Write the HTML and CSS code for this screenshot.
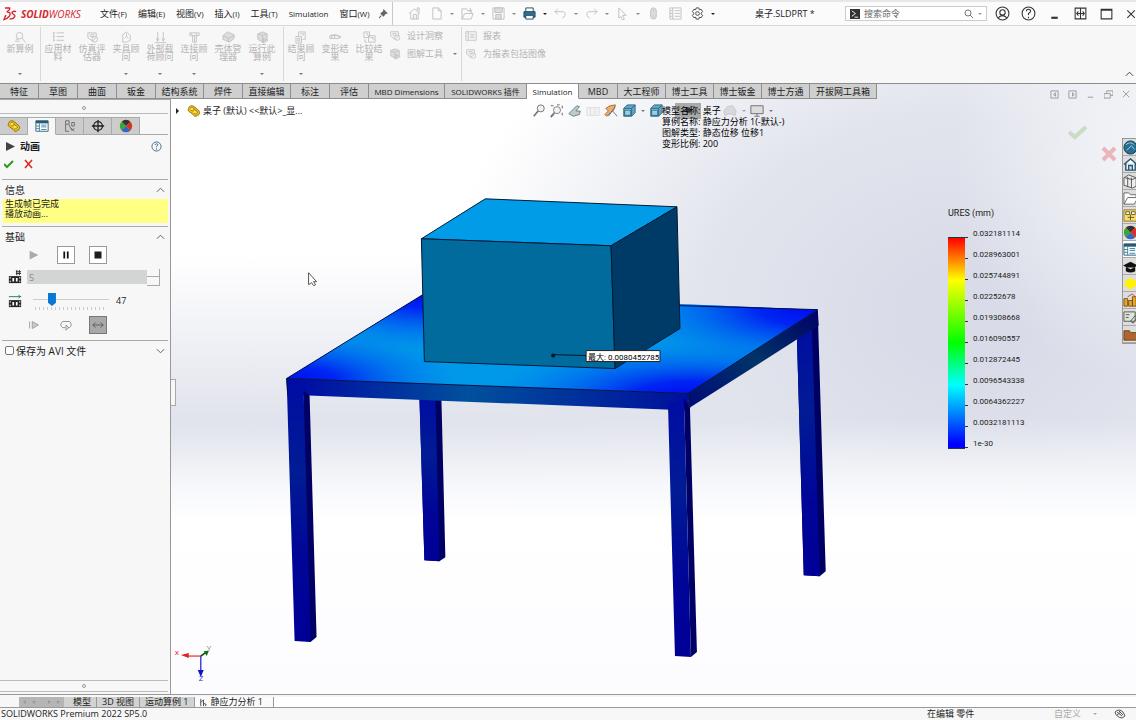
FILE: index.html
```html
<!DOCTYPE html>
<html lang="zh-CN">
<head>
<meta charset="utf-8">
<title>桌子.SLDPRT - SOLIDWORKS</title>
<link rel="stylesheet" href="styles.css">
</head>
<body>
<svg class="defs" aria-hidden="true">
  <defs>
    <symbol id="i-mag" viewBox="0 0 14 14"><circle cx="6" cy="5" r="3.5"/><path d="M8.500 7.500l4 5M1 11h5M2 9h3"/></symbol>
    <symbol id="i-list" viewBox="0 0 14 14"><path d="M1 2h2M5 2h8M1 6h2M5 6h8M1 10h2M5 10h8M2 1v10"/></symbol>
    <symbol id="i-eval" viewBox="0 0 14 14"><path d="M2 2h9v5l-4 4-5-4zM4 4h5M4 6h5"/><circle cx="9.500" cy="9" r="3"/></symbol>
    <symbol id="i-fix" viewBox="0 0 14 14"><path d="M3 12V4l4-3 4 4v5l-4 2zM5 8l2-2 2 2M7 3v3"/></symbol>
    <symbol id="i-load" viewBox="0 0 14 14"><path d="M4 1v10M2.500 8L4 11l1.500-3M10 1v10M8.500 8l1.500 3 1.500-3M1 12.500h12"/></symbol>
    <symbol id="i-conn" viewBox="0 0 14 14"><path d="M2 2h10v3H2zM5 5v7h4V5M7 5v7M3 2l2 3M8 2l2 3"/></symbol>
    <symbol id="i-shell" viewBox="0 0 14 14"><path class="soft" d="M1 5l5-4 7 3v4l-5 4-7-3z"/><path d="M1 5l6 3 6-3M7 8v4"/></symbol>
    <symbol id="i-run" viewBox="0 0 14 14"><path class="soft" d="M2 3l5-2 5 2v6l-5 3-5-3z"/><path d="M2 3l5 2 5-2M7 5v7M8 8l5 2-5 3z"/></symbol>
    <symbol id="i-result" viewBox="0 0 14 14"><path d="M4 6V1h7v8H8M1 6h6v7H1zM3 8h2v3H3zM6 3h3v2"/></symbol>
    <symbol id="i-deform" viewBox="0 0 14 14"><path d="M1 5h10v3H1zM1 5q6-3 12 2l-3-1M3 5v3M6 5v3"/></symbol>
    <symbol id="i-comp" viewBox="0 0 14 14"><path d="M1 1h6v6H1zM6 5h7v7H6zM3 3h2v2M8 7h3v3M2 9v3h2"/></symbol>
    <symbol id="i-report" viewBox="0 0 14 14"><path d="M1 2h12v10H1zM4 2v10M6 5h5M6 7h5M6 9h5M2 4h1M2 8h1"/></symbol>
    <symbol id="i-part" viewBox="0 0 16 16"><path d="M2 5c0-3 4-4 6-2l5 4c2 2 2 5-1 6-2 2-4 1-5-1l-4-3C1 8 1 6 2 5z" fill="#eec11b" stroke="#876400"/><path d="M4 5c1-2 4-1 4 1S5 8 4 7M8 6l4 3c0 2-2 3-4 2" fill="#ffe05b" stroke="#9a7300"/></symbol>
    <symbol id="i-ball" viewBox="0 0 16 16"><circle cx="8" cy="8" r="7" fill="#efb700"/><path d="M8 8L3 3a7 7 0 0 1 10 0z" fill="#333"/><path d="M8 8L3 3a7 7 0 0 0 0 10z" fill="#38a53d"/><path d="M8 8l5-5a7 7 0 0 1 0 10z" fill="#d83129"/><path d="M8 8L3 13a7 7 0 0 0 10 0z" fill="#3167cc"/></symbol>
    <symbol id="i-table" viewBox="0 0 16 16"><path d="M1 2h14v12H1z" fill="#fff" stroke="#255b78"/><path d="M1 2h14v3H1z" fill="#255b78"/><path d="M5 5v9M1 8h4M1 11h4M7 7h6M7 9h6M7 12h6" stroke="#397da0"/></symbol>
    <symbol id="i-film" viewBox="0 0 16 16"><path d="M1 7h14v8H1z" fill="#222"/><path d="M5 9h2v4H5zM9 9h2v4H9zM2 8h1v2H2zM2 12h1v2H2zM13 8h1v2h-1zM13 12h1v2h-1z" fill="#fff"/></symbol>
    <symbol id="i-cube" viewBox="0 0 16 16"><path d="M2 5l4-4h9v9l-4 4H2z" fill="#62a9c7" stroke="#27627e"/><path d="M2 5h9v9M11 5l4-4M3 7h7v6H3z" fill="#9dccdf" stroke="#27627e"/></symbol>
    <symbol id="i-up" viewBox="0 0 10 6"><path d="M1 5l4-4 4 4"/></symbol>
    <symbol id="i-down" viewBox="0 0 10 6"><path d="M1 1l4 4 4-4"/></symbol>
  </defs>
</svg>

<header class="titlebar">
  <div class="brand">
    <svg class="brand-mark" viewBox="0 0 16 15"><path d="M2 1h5q1 2-3 4M4 5.500q5-.500 3 4-2 3-6 4l2-5M14 5c-3-1-5 0-4 2 1 1 4 2 2 4-1 2-3 2-5 2"/></svg>
    <span class="brand-name"><b>SOLID</b>WORKS</span>
  </div>
  <nav class="menus">
    <button>文件<small>(F)</small></button><button>编辑<small>(E)</small></button><button>视图<small>(V)</small></button><button>插入<small>(I)</small></button><button>工具<small>(T)</small></button><button class="menu-sim">Simulation</button><button>窗口<small>(W)</small></button>
  </nav>
  <svg class="pin" viewBox="0 0 10 10"><path d="M5 1l4 4-2 .500L5 8 2 5l2.500-2z" fill="#666"/><path d="M3 7L1 9" stroke="#666"/></svg>
  <div class="quick">
    <button class="q" aria-label="主页"><svg viewBox="0 0 14 14"><path d="M1 7l6-5 6 5M3 6v7h8V6M6 13V8h3v5M10 4V1h2v4"/></svg></button>
    <button class="q drop" aria-label="新建"><svg viewBox="0 0 14 14"><path d="M3 1h6l3 3v9H3zM9 1v3h3"/></svg></button>
    <button class="q drop" aria-label="打开"><svg viewBox="0 0 14 14"><path d="M1 13V2h5l1 2h4v3M1 13l3-6h9l-2 6zM10 1v4M8 3l2 2 2-2"/></svg></button>
    <button class="q drop" aria-label="保存"><svg viewBox="0 0 14 14"><path d="M1 1h12v12H1z"/><path class="soft" d="M3 1h8v5H3zM4 8h6v5H4z"/></svg></button>
    <button class="q drop dark" aria-label="打印"><svg viewBox="0 0 14 14"><path d="M3 6V1h8v5" fill="#fff" stroke="#24495f"/><path d="M1 5h12v6H1z" fill="#2f7194" stroke="#24495f"/><path d="M3 9h8v4H3z" fill="#fff" stroke="#24495f"/></svg></button>
    <button class="q drop" aria-label="撤销"><svg viewBox="0 0 14 14"><path d="M1 5h7q5 0 4 4-1 2-3 3M4 2L1 5l3 3"/></svg></button>
    <button class="q drop" aria-label="重做"><svg viewBox="0 0 14 14"><path d="M13 5H6Q1 5 2 9q1 2 3 3M10 2l3 3-3 3"/></svg></button>
    <button class="q drop" aria-label="选择"><svg viewBox="0 0 14 14"><path d="M3 1l8 8H7l2 4-2 1-2-4-2 2z"/></svg></button>
    <button class="q" aria-label="重建"><svg viewBox="0 0 14 14"><rect class="soft" x="4" y="1" width="6" height="12" rx="3"/><path d="M7 3v2M7 9v2"/></svg></button>
    <button class="q" aria-label="属性"><svg viewBox="0 0 14 14"><path d="M1 1h12v12H1zM4 1v12M6 4h6M6 7h6M6 10h6M1 4h3M1 7h3M1 10h3"/></svg></button>
    <button class="q drop dark" aria-label="选项"><svg viewBox="0 0 14 14"><path d="M5.500 1h3l.5 2 2-.500 1.500 2.500L11 6.500v1L12.500 9 11 11.500 9 11l-.5 2h-3L5 11l-2 .500L1.500 9 3 7.500v-1L1.500 5 3 2.500 5 3z"/><circle cx="7" cy="7" r="2"/></svg></button>
  </div>
  <h1 class="doc">桌子.SLDPRT *</h1>
  <form class="search"><svg class="cmd" viewBox="0 0 11 11"><path d="M0 0h11v11H0z" fill="#303236"/><path d="M2 2l4 3-4 3M5 9h4" stroke="#fff" fill="none"/></svg><input type="text" placeholder="搜索命令" aria-label="搜索命令"><svg class="lens" viewBox="0 0 10 10"><circle cx="4" cy="4" r="3"/><path d="M6 6l3 3"/></svg><i class="caret"></i></form>
  <div class="win">
    <button aria-label="用户"><svg viewBox="0 0 14 14"><circle cx="7" cy="7" r="6"/><circle cx="7" cy="6" r="2.500"/><path d="M3 11q4-4 8 0"/></svg></button>
    <button aria-label="帮助"><svg viewBox="0 0 14 14"><circle cx="7" cy="7" r="6"/><path d="M5 5q0-2 2-2t2 2q0 1-2 2v1.500M7 10v1.500"/></svg></button>
    <button aria-label="最小化"><svg viewBox="0 0 14 14"><path d="M4 11h6" stroke-width="2"/></svg></button>
    <button aria-label="并排"><svg viewBox="0 0 14 14"><path d="M2 2h10v10H2zM7 2v10M3 7h8M5 5L3.500 7 5 9M9 5l1.500 2L9 9"/></svg></button>
    <button aria-label="最大化"><svg viewBox="0 0 14 14"><path d="M2 3h10v9H2zM2 4h10"/></svg></button>
    <button aria-label="关闭"><svg viewBox="0 0 14 14"><path d="M4 4l7 7M11 4l-7 7"/></svg></button>
  </div>
</header>

<section class="ribbon">
  <button class="cmdb first more"><svg><use href="#i-mag"/></svg><span>新算例</span></button>
  <div class="rgroup study">
    <button class="cmdb"><svg><use href="#i-list"/></svg><span>应用材料</span></button>
    <button class="cmdb"><svg><use href="#i-eval"/></svg><span>仿真评估器</span></button>
    <button class="cmdb more"><svg><use href="#i-fix"/></svg><span>夹具顾问</span></button>
    <button class="cmdb more"><svg><use href="#i-load"/></svg><span>外部载荷顾问</span></button>
    <button class="cmdb more"><svg><use href="#i-conn"/></svg><span>连接顾问</span></button>
    <button class="cmdb"><svg><use href="#i-shell"/></svg><span>壳体管理器</span></button>
    <button class="cmdb more"><svg><use href="#i-run"/></svg><span>运行此算例</span></button>
  </div>
  <div class="rgroup">
    <button class="cmdb more"><svg><use href="#i-result"/></svg><span>结果顾问</span></button>
    <button class="cmdb"><svg><use href="#i-deform"/></svg><span>变形结果</span></button>
    <button class="cmdb"><svg><use href="#i-comp"/></svg><span>比较结果</span></button>
    <div class="rows"><button><svg><use href="#i-eval"/></svg>设计洞察</button><button><svg><use href="#i-run"/></svg>图解工具<i class="caret"></i></button></div>
  </div>
  <div class="rgroup last">
    <div class="rows"><button><svg><use href="#i-report"/></svg>报表</button><button><svg><use href="#i-eval"/></svg>为报表包括图像</button></div>
  </div>
  <button class="collapse" aria-label="折叠"><svg class="chev"><use href="#i-up"/></svg></button>
</section>

<main class="work">
  <div class="tabrow">
    <nav class="tabs">
      <button>特征</button><button>草图</button><button>曲面</button><button>钣金</button><button class="m">结构系统</button><button>焊件</button><button class="m">直接编辑</button><button>标注</button><button>评估</button><button class="dim">MBD Dimensions</button><button class="addin">SOLIDWORKS 插件</button><button class="sim on">Simulation</button><button>MBD</button><button class="m">大工程师</button><button class="m">博士工具</button><button class="m">博士钣金</button><button class="m">博士方通</button><button class="l">开拔网工具箱</button>
    </nav>
    <div class="docwin">
      <button aria-label="左窗格"><svg viewBox="0 0 10 10"><path d="M1 1h8v8H1zM6 3L4 5l2 2z"/></svg></button>
      <button aria-label="右窗格"><svg viewBox="0 0 10 10"><path d="M1 1h8v8H1zM5 3l2 2-2 2z"/></svg></button>
      <button aria-label="最小化文档"><svg viewBox="0 0 10 10"><path d="M2 8h6"/></svg></button>
      <button aria-label="还原文档"><svg viewBox="0 0 10 10"><path d="M3 3V1h7v5H7M0 4h7v5H0z"/></svg></button>
      <button aria-label="关闭文档"><svg viewBox="0 0 10 10"><path d="M1 1l7 7M8 1L1 8"/></svg></button>
    </div>
  </div>

  <div class="body">
    <aside class="panel">
      <div class="grip"><i></i></div>
      <nav class="ptabs">
        <button aria-label="特征树"><svg><use href="#i-part"/></svg></button>
        <button class="on" aria-label="属性"><svg><use href="#i-table"/></svg></button>
        <button aria-label="配置"><svg viewBox="0 0 16 16"><path d="M3 2h4v4H3zM3 6v8h4M10 4h3v4h-3zM7 7l3 6 3-2M9 10l4 4" fill="none" stroke="#666"/></svg></button>
        <button aria-label="尺寸专家"><svg viewBox="0 0 16 16"><circle cx="8" cy="8" r="5" fill="none" stroke="#222" stroke-width="1.500"/><path d="M8 1v14M1 8h14" stroke="#222" stroke-width="1.500"/></svg></button>
        <button aria-label="外观"><svg><use href="#i-ball"/></svg></button>
      </nav>
      <div class="phead"><svg viewBox="0 0 10 10"><path d="M0 0l10 5-10 5z" fill="#444"/></svg><h2>动画</h2><button aria-label="帮助"><svg viewBox="0 0 12 12"><circle cx="6" cy="6" r="5" fill="none" stroke="#3b6788"/><path d="M4.500 4.500q0-1.500 1.500-1.500t1.500 1.500L6 6v1M6 8v1.500" fill="none" stroke="#3b6788"/></svg></button></div>
      <div class="okrow"><button aria-label="确定"><svg viewBox="0 0 10 10"><path d="M0 5l3 3 6-6" fill="none" stroke="#2b9a22" stroke-width="2"/></svg></button><button aria-label="取消"><svg viewBox="0 0 10 10"><path d="M1 1l7 8M8 1L1 9" fill="none" stroke="#dc2417" stroke-width="1.500"/></svg></button></div>
      <section class="sec">
        <h3>信息<svg class="chev"><use href="#i-up"/></svg></h3>
        <p class="msg">生成帧已完成<br>播放动画...</p>
      </section>
      <section class="sec base">
        <h3>基础<svg class="chev"><use href="#i-up"/></svg></h3>
        <div class="play">
          <button aria-label="播放"><svg viewBox="0 0 16 16"><path d="M3 3l10 5-10 5z" fill="#aaa"/></svg></button>
          <button class="box" aria-label="暂停"><svg viewBox="0 0 16 16"><path d="M6 4v8M10 4v8" stroke="#111" stroke-width="2"/></svg></button>
          <button class="box" aria-label="停止"><svg viewBox="0 0 16 16"><path d="M4 4h8v8H4z" fill="#1c1c24"/></svg></button>
        </div>
        <div class="frames"><svg class="ic" viewBox="0 0 16 16"><use href="#i-film"/><path d="M10 0v6M13 0v6M9 2h6M9 4h6" stroke="#222"/></svg><input type="text" value="5" disabled aria-label="帧数"><div class="spin"><button aria-label="增加"></button><button aria-label="减少"></button></div></div>
        <div class="speed"><svg class="ic" viewBox="0 0 16 16"><use href="#i-film"/><path d="M1 3h14M12 1l2 2-2 2" stroke="#087b67" fill="none"/></svg><div class="track"><input type="range" min="0" max="100" value="22" aria-label="速度"><div class="ticks"></div></div><output>47</output></div>
        <div class="play loop">
          <button aria-label="单次"><svg viewBox="0 0 16 16"><path d="M3 4v8" stroke="#999"/><path d="M6 4l7 4-7 4z" fill="#ccc" stroke="#999"/></svg></button>
          <button aria-label="循环"><svg viewBox="0 0 16 16"><path d="M7 11H4Q0 8 4 4h8q4 4 0 7H10M8 8v6l3-3z" fill="none" stroke="#888"/></svg></button>
          <button class="box on" aria-label="往复"><svg viewBox="0 0 16 16"><path d="M2 8h12M5 5L2 8l3 3M11 5l3 3-3 3" fill="none" stroke="#555"/></svg></button>
        </div>
      </section>
      <section class="sec save"><label><input type="checkbox">保存为 AVI 文件</label><svg class="chev"><use href="#i-down"/></svg></section>
      <div class="grip foot"><i></i></div>
    </aside>

    <section class="view">
      <svg class="scene" viewBox="171 98 965 596" preserveAspectRatio="xMidYMid meet">
        <defs>
          <radialGradient id="corner"><stop offset="0" stop-color="#0008f0"/><stop offset=".3" stop-color="#0018f4" stop-opacity=".9"/><stop offset=".65" stop-color="#0048f4" stop-opacity=".45"/><stop offset="1" stop-color="#0070f0" stop-opacity="0"/></radialGradient>
          <linearGradient id="front"><stop offset="0" stop-color="#0008a4"/><stop offset=".45" stop-color="#00509c"/><stop offset="1" stop-color="#000f9c"/></linearGradient>
          <linearGradient id="side" x1="0" y1="1" x2="1" y2="0"><stop offset="0" stop-color="#000a78"/><stop offset=".5" stop-color="#003468"/><stop offset="1" stop-color="#000068"/></linearGradient>
          <linearGradient id="leg" x2="0" y2="1"><stop offset="0" stop-color="#000ca4"/><stop offset=".35" stop-color="#001c94"/><stop offset=".7" stop-color="#000598"/><stop offset="1" stop-color="#000096"/></linearGradient>
          <clipPath id="topclip"><path d="M286 378L424 293 818 309 688 393z"/></clipPath>
        </defs>
        <path d="M419 396h22l4 161-6 4-15-1z" fill="#000062"/><path d="M419 396h16l4 165-15-1z" fill="url(#leg)"/>
        <path d="M797 332l21-22 8 261-6 5-16-1z" fill="#000062"/><path d="M797 332l15-10 8 254-16-1z" fill="url(#leg)"/>
        <g clip-path="url(#topclip)"><path d="M280 280h550v130H280z" fill="#0098e9"/>
          <ellipse cx="286" cy="382" rx="170" ry="56" fill="url(#corner)"/><ellipse cx="424" cy="289" rx="150" ry="62" fill="url(#corner)"/><ellipse cx="818" cy="306" rx="200" ry="66" fill="url(#corner)"/><ellipse cx="690" cy="398" rx="200" ry="58" fill="url(#corner)"/></g>
        <path d="M688 393L818 309l1 16-22 14-107 68z" fill="url(#side)"/>
        <path d="M286 378l402 15 2 17-382-15-21 1z" fill="url(#front)"/>
        <path d="M303 390l6 5 7 242-6 5-10-2z" fill="#000065"/><path d="M286 378l17 12 7 252-16-1z" fill="url(#leg)"/>
        <path d="M684 398l6 9 7 245-6 5z" fill="#000065"/><path d="M668 403l16-5 7 259-16-1z" fill="url(#leg)"/>
        <path d="M286 378L424 293M680 305l138 4-130 84-402-15 1 15M688 393l2 14" fill="none" stroke="#001044"/>
        <g stroke="#001a36" stroke-linejoin="round"><path d="M421 238l64-40 192 8-66 39z" fill="#009ce7"/><path d="M421 238l190 7 4 123-191-7z" fill="#006b9c"/><path d="M611 245l66-39 3 122-65 40z" fill="#003a66"/></g>
        <path d="M552 354l34 1" stroke="#001428"/><circle cx="553" cy="355" r="2" fill="#001428"/>
        <path d="M586 350h74v11h-74z" fill="#fff" stroke="#222"/>
        <text class="maxtext" x="588" y="359">最大: 0.0080452785</text>
        <path d="M308 272v12l3-2 2 3 2-1-2-3h3z" fill="#fff" stroke="#555"/>
        <g stroke-width="1.500"><path d="M200 656h-15" stroke="#ee5252"/><path d="M188 653v5l-8-3z" fill="#df2222"/><path d="M200 656v15" stroke="#4444dc"/><path d="M197 670h6l-3 7z" fill="#1111cc"/><path d="M200 656l7-5" stroke="#073c0b"/><path d="M203 651l5 0-2 5z" fill="#06770e"/></g>
        <text class="axis" x="174" y="655" fill="#d22">x</text><text class="axis" x="206" y="651" fill="#777">Y</text><text class="axis" x="198" y="681" fill="#33c">Z</text>
      </svg>

      <button class="splitter" aria-label="收起面板"></button>
      <div class="tree"><i></i><svg><use href="#i-part"/></svg><span>桌子 (默认) &lt;&lt;默认&gt;_显...</span></div>
      <div class="viewtools">
        <button aria-label="整屏显示"><svg viewBox="0 0 16 16"><circle cx="10" cy="5" r="4" fill="#eef5fa" stroke="#666"/><path d="M7 8l-5 6" stroke="#777" stroke-width="2"/></svg></button>
        <button aria-label="局部放大"><svg viewBox="0 0 16 16"><path d="M1 2h3M8 1h3M14 2v3M14 10v3M1 13h3" stroke="#555"/><circle cx="8" cy="7" r="4" fill="#eef5fa" stroke="#777"/><path d="M5 10l-4 5" stroke="#777" stroke-width="2"/></svg></button>
        <button aria-label="上一视图"><svg viewBox="0 0 16 16"><path d="M1 11l9-9 3 1-4 5h5l-1 4-7 2z" fill="#bdcbd1" stroke="#66777d"/></svg></button>
        <button class="faint" aria-label="剖面"><svg viewBox="0 0 16 16"><path d="M1 4h14v9H1zM5 4v9M10 4v9" fill="#eee" stroke="#ccc"/></svg></button>
        <button aria-label="动态注解"><svg viewBox="0 0 16 16"><path d="M2 5l5-3 6-1-2 6-3 2-5 5-2-2 4-4z" fill="#edb06d" stroke="#a45b28"/><path d="M13 3L5 14M9 7l6 7" stroke="#557482"/></svg></button>
        <button class="vd" aria-label="视图定向"><svg><use href="#i-cube"/></svg><i class="caret"></i></button>
        <button aria-label="显示样式"><svg><use href="#i-cube"/></svg></button>
        <button class="pressed" aria-label="隐藏项目"><svg viewBox="0 0 16 16"><path d="M1 8q7-8 14 0-7 7-14 0z" fill="#bbb" stroke="#888"/><circle cx="8" cy="7" r="3" fill="#333"/></svg></button>
        <button class="vd scenebtn faint" aria-label="应用布景"><svg viewBox="0 0 16 16"><path d="M2 13L1 8l4-5 6-1 4 6-1 5-6-2z" fill="#ccc" stroke="#aaa"/></svg><i class="caret"></i></button>
        <button class="vd" aria-label="视图设定"><svg viewBox="0 0 16 16"><path d="M1 2h14v9H1zM8 11v3M5 14h6" fill="#ddd" stroke="#666"/></svg><i class="caret"></i></button>
      </div>
      <p class="hud">模型名称: 桌子<br>算例名称: 静应力分析 1(-默认-)<br>图解类型: 静态位移 位移1<br>变形比例: 200</p>
      <div class="confirm"><svg class="yes" viewBox="0 0 20 16"><path d="M1 7l6 5L18 2" /></svg><svg class="no" viewBox="0 0 18 18"><path d="M3 3l12 12M15 3L3 15"/></svg></div>
      <div class="legend">
        <h4>URES (mm)</h4>
        <div class="scale"><div class="bar"></div><ol><li>0.032181114</li><li>0.028963001</li><li>0.025744891</li><li>0.02252678</li><li>0.019308668</li><li>0.016090557</li><li>0.012872445</li><li>0.0096543338</li><li>0.0064362227</li><li>0.0032181113</li><li>1e-30</li></ol></div>
      </div>
      <nav class="task">
        <button aria-label="3DEXPERIENCE"><svg viewBox="0 0 16 16"><circle cx="8" cy="8" r="7" fill="#286e91" stroke="#153e56"/><path d="M3 5q5-4 9 0M4 11l5-5 3 4" fill="none" stroke="#9ad1e8"/></svg></button>
        <button aria-label="资源"><svg viewBox="0 0 16 16"><path d="M1 8l7-6 7 6M3 7v7h10V7M6 14V9h4v5" fill="#fff" stroke="#24576f" stroke-width="1.500"/></svg></button>
        <button aria-label="设计库"><svg viewBox="0 0 16 16"><path d="M1 4l5-3 8 3v9l-4 2-9-3zM5 3v11M9 4v11M2 4l8 2 4-2" fill="#eee" stroke="#555"/></svg></button>
        <button aria-label="文件探索器"><svg viewBox="0 0 16 16"><path d="M1 14V2h5l2 2h6v3M1 14l4-7h11l-4 7z" fill="#fff" stroke="#666"/></svg></button>
        <button aria-label="视图调色板"><svg viewBox="0 0 16 16"><path d="M1 2h14v12H1z" fill="#f5dc72" stroke="#8c762b"/><path d="M3 4h4v3H3zM9 4h4v3H9zM5 10h7M8 7v6" fill="#fff" stroke="#665821"/></svg></button>
        <button aria-label="外观"><svg><use href="#i-ball"/></svg></button>
        <button class="on" aria-label="自定义属性"><svg><use href="#i-table"/></svg></button>
        <button aria-label="学习"><svg viewBox="0 0 16 16"><path d="M0 7l8-4 8 4-8 4zM3 9v4q5 3 10 0V9" fill="#111"/></svg></button>
        <button aria-label="提示"><svg viewBox="0 0 16 16"><path d="M8 1l2 3 4 0-1 4 2 3-4 1-3 3-3-3-4-1 2-3-1-4 4 0z" fill="#fff300"/></svg></button>
        <button aria-label="库"><svg viewBox="0 0 16 16"><path d="M1 6h4v8H1zM6 8h4v6H6zM10 4h4v10h-4z" fill="#e7a72c" stroke="#77531e"/><path d="M5 4l5-3 3 3" fill="none" stroke="#c4422d"/></svg></button>
        <button aria-label="设计"><svg viewBox="0 0 16 16"><path d="M1 2h12v10H1zM3 5h4M3 8h3M8 12l5-6 2 2-4 6z" fill="#dde5d8" stroke="#555"/></svg></button>
        <button aria-label="工具箱"><svg viewBox="0 0 16 16"><path d="M1 4h6l1 2h8v8H1z" fill="#ae672e" stroke="#704119"/></svg></button>
      </nav>
    </section>
  </div>
</main>

<nav class="sheets"><div class="arrows"><svg viewBox="0 0 40 8"><path d="M5 2L2 4l3 2zM14 2l-3 2 3 2zM27 2l3 2-3 2zM36 2l3 2-3 2z"/></svg></div><button class="model">模型</button><button>3D 视图</button><button>运动算例 1</button><button class="on"><svg viewBox="0 0 10 10"><path d="M2 1v8M2 5l3-3v7M5 6l3 1-1 2" fill="none" stroke="#345"/></svg>静应力分析 1</button><div class="rest"></div></nav>
<footer class="status"><span>SOLIDWORKS Premium 2022 SP5.0</span><span class="mode">在编辑 零件</span><button class="units">自定义<i class="caret"></i></button><svg viewBox="0 0 12 10"><path d="M1 3q4-4 8 0l2 4-3 2q-6-1-7-6zM3 3l5 4M5 2l4 4M3 6l4-3" fill="none" stroke="#555"/></svg></footer>
</body>
</html>
```
FILE: styles.css
```css
* { box-sizing: border-box; }
html, body { height: 100%; }
body {
  margin: 0;
  display: flex;
  flex-direction: column;
  overflow: hidden;
  background: #f7f7f7;
  color: #1c1c1c;
  font: 9px/12px "Open Sans", "Noto Sans CJK SC", sans-serif;
}
.defs { position: absolute; width: 0; height: 0; }
button { margin: 0; padding: 0; border: 0; background: none; color: inherit; font: inherit; white-space: nowrap; }
button svg { display: block; }
h1, h2, h3, h4, p, ol { margin: 0; padding: 0; font: inherit; }
.caret, .q.drop::after { content: ""; display: block; flex: none; width: 0; height: 0; border: 2px solid transparent; border-top-color: currentColor; border-bottom: 0; }
.chev { display: block; width: 9px; height: 6px; fill: none; stroke: #555; }

/* Title bar */
.titlebar { flex: none; display: flex; align-items: center; height: 26px; padding-top: 2px; background: #fbfbfb; border-bottom: 1px solid #d8d8d8; box-shadow: inset 0 2px #e7e7e7; }
.brand { display: flex; align-items: center; gap: 3px; width: 100px; padding-left: 3px; color: #d3262c; }
.brand-mark { width: 15px; height: 14px; fill: none; stroke: #d3262c; stroke-width: 1.5; }
.brand-name { font: italic 10px/12px "Open Sans", sans-serif; }
.brand-name b { font-weight: 700; }
.menus { display: flex; gap: 11px; width: 278px; }
.menus small { font-size: 8px; }
.menu-sim { font-size: 8px; }
.pin { width: 11px; height: 11px; margin-right: 3px; }
.quick { display: flex; align-items: center; align-self: stretch; width: 363px; padding-left: 15px; border-left: 1px solid #c8c8c8; gap: 9px; color: #888; }
.q { display: flex; align-items: center; gap: 7px; }
.q.drop { margin-right: -2px; }
.q svg { width: 13px; height: 13px; fill: none; stroke: #c0c0c0; }
.q.dark { color: #222; }
.q.dark svg { stroke: #444; }
.soft { fill: #ddd; }
.doc { flex: 1; }
.search { display: flex; align-items: center; width: 142px; height: 15px; padding: 0 4px; background: #fff; border: 1px solid #ccc; color: #999; }
.search input { flex: 1; min-width: 0; padding: 0 4px; border: 0; background: none; font: inherit; }
.search input::placeholder { color: #666; }
.cmd { width: 10px; height: 10px; }
.lens { width: 10px; height: 10px; margin-right: 4px; fill: none; stroke: #777; }
.win { display: flex; gap: 11px; padding-left: 8px; margin-right: -2px; }
.win svg { width: 15px; height: 15px; fill: none; stroke: #333; }
.win button:last-child { margin-left: -2px; }

/* Ribbon */
.ribbon { flex: none; display: flex; align-items: stretch; height: 57px; padding: 1px 0 2px; color: #b4b4b4; }
.ribbon svg { fill: none; stroke: #c2c2c2; }
.rgroup { display: flex; border-left: 1px solid #d9d9d9; }
.rgroup.study { padding-right: 4px; }
.cmdb { position: relative; display: flex; flex-direction: column; align-items: center; gap: 1px; width: 34px; padding: 4px 3px 0; line-height: 8px; white-space: normal; }
.cmdb.first { width: 40px; }
.cmdb svg { flex: none; width: 13px; height: 13px; }
.cmdb.more::after { content: ""; position: absolute; bottom: 6px; border: 2px solid transparent; border-top-color: #777; border-bottom: 0; }
.rows { display: flex; flex-direction: column; gap: 6px; padding: 3px 4px 0 3px; }
.rows button { display: flex; align-items: center; gap: 6px; }
.rows svg { width: 12px; height: 12px; }
.rows .caret { margin-left: 4px; color: #777; }
.rgroup.last { flex: 1; }
.collapse { align-self: flex-end; padding: 0 2px 4px 0; }
.ribbon .collapse svg { stroke: #333; }

/* Work area */
.work {
  flex: 1;
  min-height: 0;
  display: flex;
  flex-direction: column;
  border-top: 1px solid #8d8d8d;
  background:
    linear-gradient(to bottom, transparent 55%, #f7f8fb 66%, #fff 72%, #fcfcff 100%),
    radial-gradient(ellipse 16% 36% at 100% 12%, #f3f4f7, transparent),
    radial-gradient(ellipse 46% 66% at 85% 38%, #d9dce8 12%, #e2e4ed 50%, transparent),
    linear-gradient(to bottom, #fff 28%, #dfe1eb 57%);
}
.tabrow { flex: none; display: flex; justify-content: space-between; height: 15px; }
.tabs { display: flex; }
.tabs button { width: 39px; border: 1px solid #8e8e8e; border-width: 0 1px 1px 0; background: #cfcfcf; line-height: 13px; }
.tabs .m { width: 48px; }
.tabs .l { width: 67px; }
.tabs .dim { width: 76px; font-size: 8px; }
.tabs .addin { width: 82px; font-size: 8px; }
.tabs .sim { width: 52px; font-size: 8px; }
.tabs .on { background: #fff; border-bottom-color: #fff; }
.docwin { display: flex; align-items: flex-end; gap: 9px; padding-right: 5px; }
.docwin svg { width: 9px; height: 9px; fill: none; stroke: #969696; }
.body { flex: 1; min-height: 0; display: flex; }

/* Property panel */
.panel { flex: none; display: flex; flex-direction: column; width: 171px; padding: 2px 2px 2px 0; background: #f7f7f7; border-right: 1px solid #999; border-top: 1px solid #aaa; }
.grip { flex: none; display: flex; justify-content: center; align-items: center; height: 12px; border: 1px solid #bbb; border-width: 0 0 1px; }
.grip i { width: 4px; height: 4px; border: 1px solid #999; border-radius: 50%; }
.foot { margin-top: auto; border-width: 1px 0; }
.ptabs { flex: none; display: flex; height: 21px; padding-top: 3px; border-bottom: 1px solid #aaa; }
.ptabs button { display: grid; place-items: center; width: 28px; height: 18px; background: #ccc; border: 1px solid #aaa; border-width: 1px 1px 1px 0; }
.ptabs .on { background: #f7f7f7; border-bottom-color: #f7f7f7; }
.ptabs svg { width: 14px; height: 14px; }
.phead { display: flex; align-items: center; gap: 5px; height: 22px; padding: 0 6px; }
.phead svg { width: 9px; height: 9px; }
.phead h2 { flex: 1; font-size: 10px; font-weight: 700; }
.phead button { margin-right: 0; }
.phead button svg { width: 11px; height: 11px; }
.okrow { display: flex; gap: 10px; height: 22px; padding: 2px 4px; align-items: flex-start; }
.okrow svg { width: 10px; height: 10px; }
.sec { margin: 0 0 0 2px; border-top: 1px solid #aaa; }
.sec h3 { display: flex; align-items: center; justify-content: space-between; height: 19px; padding: 0 3px; font-size: 10px; }
.msg { height: 24px; margin: 0 0 3px 1px; padding: 0 2px; background: #ffff84; line-height: 10px; }
.play { display: flex; gap: 14px; padding-left: 23px; }
.play button { display: grid; place-items: center; width: 18px; height: 18px; }
.play svg { width: 14px; height: 14px; }
.play .box { border: 1px solid #999; background: #fff; }
.play .on { background: #a9a9a9; border-color: #777; }
.frames, .speed { display: flex; align-items: center; padding-left: 6px; }
.frames { margin-top: 4px; height: 18px; }
.ic { flex: none; width: 14px; height: 14px; margin-right: 5px; }
.frames input { flex: 1; min-width: 0; height: 14px; padding: 0 2px; border: 0; background: #d3d5d5; color: #888; font: inherit; }
.spin { display: grid; width: 13px; height: 17px; margin-right: 8px; }
.spin button { border: 1px solid #aaa; border-width: 0 1px 1px 0; }
.speed { height: 30px; }
.track { width: 76px; margin: 0 7px 0 6px; }
.track input { display: block; width: 100%; height: 14px; margin: 0; appearance: none; background: linear-gradient(#ccc, #ccc) center / 100% 1px no-repeat; }
.track input::-webkit-slider-thumb { appearance: none; width: 8px; height: 13px; background: #0878d5; clip-path: polygon(0 0, 100% 0, 100% 75%, 50% 100%, 0 75%); }
.ticks { height: 3px; margin: 0 2px; background: repeating-linear-gradient(to right, #ccc 0 1px, transparent 1px 4px); }
.loop { padding-bottom: 6px; }
.save { display: flex; align-items: center; justify-content: space-between; height: 20px; padding: 0 3px; }
.save label { display: flex; align-items: center; gap: 2px; font-size: 10px; }
.save input { appearance: none; width: 9px; height: 9px; margin: 0; background: #fff; border: 1px solid #777; border-radius: 2px; }

/* Graphics area */
.view { position: relative; flex: 1; min-width: 0; }
.scene { display: block; width: 100%; height: 100%; }
.maxtext { font: 8px Roboto, "Noto Sans CJK SC", sans-serif; }
.axis { font: 8px "Open Sans", sans-serif; }
.splitter { position: absolute; left: 0; top: 47%; width: 5px; height: 27px; background: #f7f7f7; border: 1px solid #aaa; border-left: 0; }
.tree { position: absolute; left: 5px; top: 5px; display: flex; align-items: center; }
.tree i { border: 3px solid transparent; border-left-color: #222; border-right: 0; }
.tree svg { width: 14px; height: 14px; margin: 0 2px 0 8px; }
.viewtools { position: absolute; left: 361px; top: 4px; display: flex; align-items: center; gap: 4px; color: #777; }
.viewtools button { display: flex; align-items: center; gap: 5px; height: 16px; }
.viewtools svg { width: 14px; height: 14px; }
.viewtools .faint { opacity: 0.6; }
.viewtools .pressed { width: 26px; justify-content: center; margin-left: 8px; background: #aaa; }
.viewtools .scenebtn { margin-left: 18px; }
.hud { position: absolute; left: 491px; top: 6px; line-height: 11px; color: #000; }
.confirm { position: absolute; right: 18px; top: 26px; display: grid; grid-template-columns: 18px 18px; column-gap: 14px; }
.confirm svg { width: 20px; height: 16px; fill: none; stroke-width: 4; }
.confirm .yes { stroke: #c9dcc4; }
.confirm .no { grid-column: 2; width: 18px; height: 18px; margin-top: 20px; stroke: #eab5bb; }
.legend { position: absolute; right: 108px; top: 108px; width: 80px; font-family: Roboto, sans-serif; }
.scale { display: flex; gap: 8px; margin-top: 4px; font-size: 8px; }
.bar { flex: none; width: 17px; height: 212px; margin-top: 14px; border: 1px solid #234; border-width: 1px 0; background: linear-gradient(#f00, #ff8000 10%, #ff0 20%, #0f0 50%, #0ff 70%, #00f 98%); }
.scale li { position: relative; height: 21px; list-style: none; line-height: 21px; }
.scale li::before { content: ""; position: absolute; left: -8px; top: 14px; width: 3px; border-top: 1px solid #333; }
.task { position: absolute; right: 0; top: 39px; width: 14px; border: 1px solid #999; border-right: 0; background: #ddd; }
.task button { display: block; width: 100%; height: 17px; overflow: hidden; border-bottom: 1px solid #aaa; }
.task svg { width: 15px; height: 15px; }
.task .on { background: #fff; }

/* Sheet tabs and status bar */
.sheets { flex: none; display: flex; height: 14px; padding-top: 2px; border-top: 1px solid #999; border-bottom: 1px solid #999; background: #f7f7f7; }
.sheets button { display: flex; align-items: center; justify-content: center; padding: 0 5px; border-right: 1px solid #999; background: #d2d2d2; }
.sheets .model { padding-left: 9px; }
.sheets .on { gap: 3px; padding: 0 10px 0 4px; background: #fafafa; }
.sheets svg { width: 9px; height: 9px; }
.arrows { width: 45px; margin-left: 19px; padding: 1px 2px; background: #b5b5b5; }
.sheets .arrows svg { display: block; width: 40px; height: 8px; fill: #999; }
.rest { flex: 1; background: #fff; }
.status { flex: none; display: flex; align-items: center; height: 12px; padding: 0 10px 0 1px; }
.mode { margin-left: auto; width: 127px; }
.units { display: flex; align-items: center; gap: 12px; width: 60px; color: #aaa; }
.status svg { width: 12px; height: 10px; }
```
